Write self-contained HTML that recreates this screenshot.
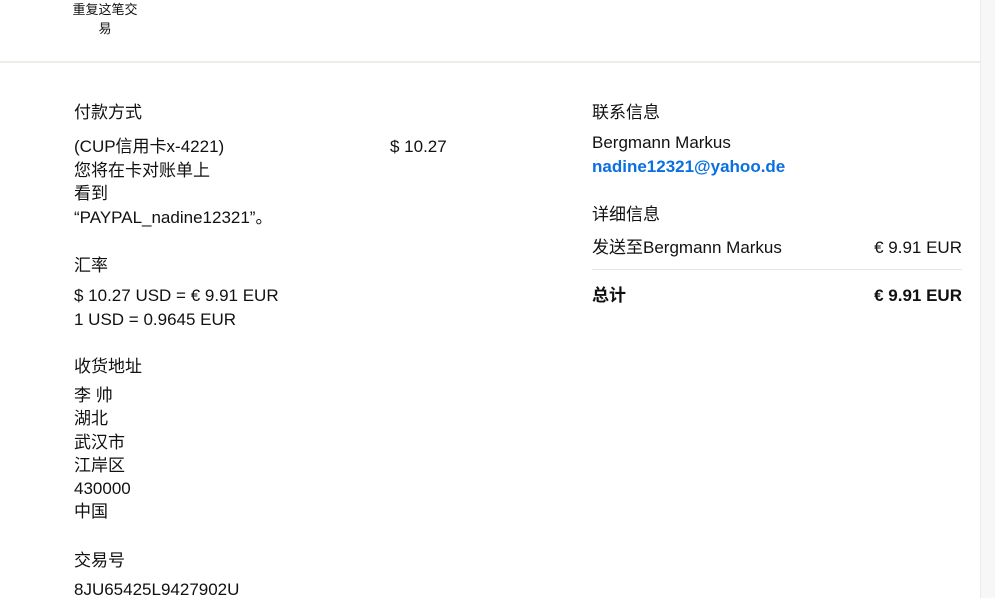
<!DOCTYPE html>
<html><head><meta charset="utf-8"><style>
html,body{margin:0;padding:0;width:995px;height:598px;overflow:hidden;background:#fff}
body{font-family:"Liberation Sans","Noto Sans CJK SC",sans-serif;color:#111;position:relative}
.rb{position:absolute;left:980px;top:0;width:15px;height:598px;background:#f7f7f7;border-left:1px solid #eaeaea}
.hl{position:absolute;left:0;top:61px;width:980px;height:2px;background:#eeeee8}
.top{position:absolute;left:66px;top:0;width:78px;text-align:center;font-size:13px;line-height:19px;color:#111}
.t{position:absolute;font-size:17px;line-height:23.5px;white-space:nowrap}
a{color:#0a6fe0;font-weight:bold;text-decoration:none}
.sep{position:absolute;left:592px;top:269px;width:370px;height:1px;background:#e6e6e6}
.r{right:33px;text-align:right}
</style></head><body>
<div class="top">重复这笔交<br>易</div>
<div class="hl"></div>
<div class="rb"></div>

<div class="t" style="left:74px;top:101px">付款方式</div>
<div class="t" style="left:74px;top:135px">(CUP信用卡x-4221)<br>您将在卡对账单上<br>看到<br>“PAYPAL_nadine12321”。</div>
<div class="t" style="left:390px;top:135px">$ 10.27</div>

<div class="t" style="left:74px;top:254px">汇率</div>
<div class="t" style="left:74px;top:284px">$ 10.27 USD = € 9.91 EUR<br>1 USD = 0.9645 EUR</div>

<div class="t" style="left:74px;top:355px">收货地址</div>
<div class="t" style="left:74px;top:384px;line-height:23.3px">李 帅<br>湖北<br>武汉市<br>江岸区<br>430000<br>中国</div>

<div class="t" style="left:74px;top:549px">交易号</div>
<div class="t" style="left:74px;top:578px">8JU65425L9427902U</div>

<div class="t" style="left:592px;top:101px">联系信息</div>
<div class="t" style="left:592px;top:131px">Bergmann Markus<br><a>nadine12321@yahoo.de</a></div>
<div class="t" style="left:592px;top:203px">详细信息</div>
<div class="t" style="left:592px;top:236px">发送至Bergmann Markus</div>
<div class="t r" style="top:236px">€ 9.91 EUR</div>
<div class="sep"></div>
<div class="t" style="left:592px;top:284px;font-weight:bold">总计</div>
<div class="t r" style="top:284px;font-weight:bold">€ 9.91 EUR</div>
</body></html>
